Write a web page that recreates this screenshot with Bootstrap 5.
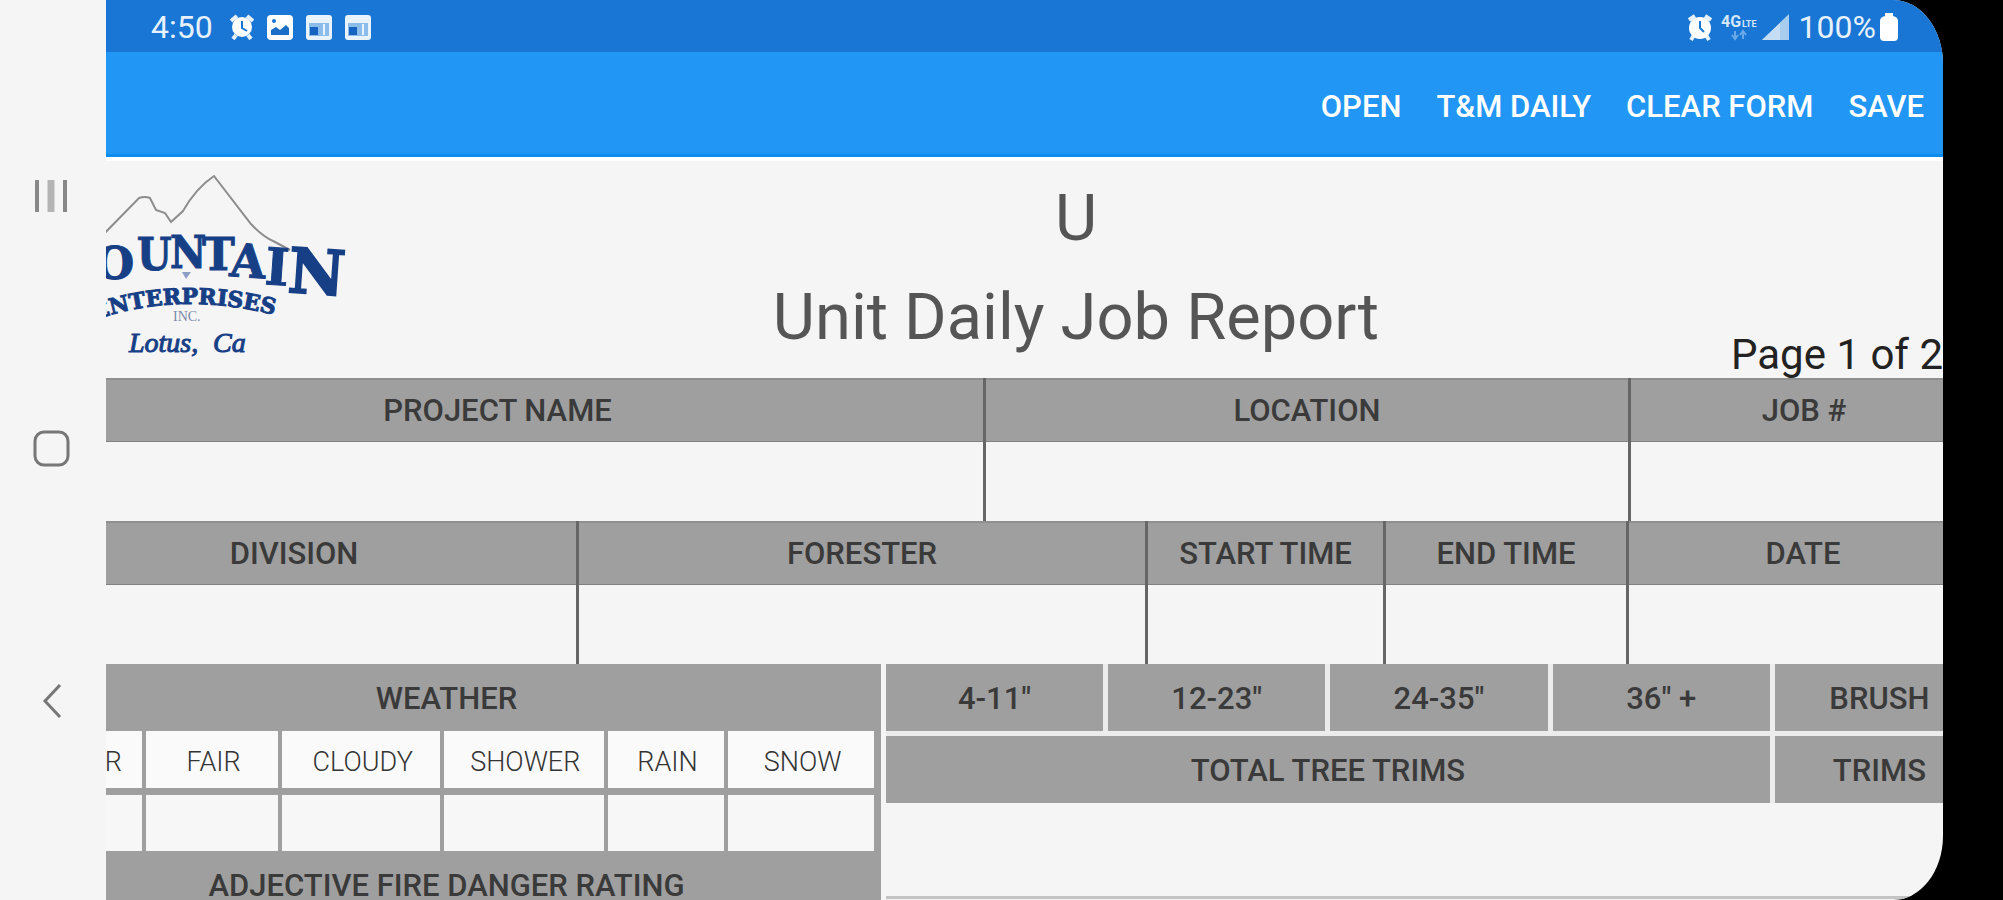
<!DOCTYPE html>
<html lang="en">
<head>
<meta charset="utf-8">
<meta name="viewport" content="width=device-width, initial-scale=1">
<title>Unit Daily Job Report</title>
<link href="https://cdn.jsdelivr.net/npm/bootstrap@5.3.0/dist/css/bootstrap.min.css" rel="stylesheet">
<style>
  body { background: #000; font-family: Roboto, "Liberation Sans", sans-serif; color: #333; }
  .device { margin-right: 60px; height: 100vh; background: #f5f5f5; border-radius: 0 50px 50px 0 / 0 64px 64px 0; }
  .sysnav { width: 106px; padding: 70px 4px 73px 0; }
  .sysnav button { width: 48px; height: 48px; }
  .statusbar { height: 52px; background: #1976d5; font-size: 32px; line-height: 40px; padding: 2px 45px 0; color: #e6f1fc; }
  .status-icons { gap: 13px; }
  .appbar { height: 105px; background: #2196f5; border-bottom: 3px solid #0b8cf0; padding: 7px 19px 0; gap: 35px; }
  .appbar button { font-size: 31px; line-height: 40px; font-weight: 500; color: #fff; }
  .sheet { margin: 0 -41px 0 -94px; }
  .sheet-head { display: grid; grid-template-columns: 409fr 1310fr 253fr; height: 221px; border-top: 4px solid #fff; }
  .sheet-head h1 { font-size: 65px; line-height: 99px; font-weight: 400; color: #555; padding-top: 8px; }
  .pageno { font-size: 42px; line-height: 46px; color: #222; }
  .fields { display: grid; margin-right: 4px; }
  .fields-a { grid-template-columns: 974fr 645fr 349fr; }
  .fields-b { grid-template-columns: 567fr 569fr 238fr 243fr 351fr; }
  .field { border-right: 3px solid #666; }
  .head { display: flex; align-items: center; justify-content: center; background: #9f9f9f; font-size: 31px; line-height: 40px; font-weight: 500; color: #3a3a3a; white-space: nowrap; }
  .field .head { height: 64px; border-top: 2px solid #8f8f8f; border-bottom: 1px solid #808080; }
  .blank { display: block; width: 100%; min-width: 0; border: 0; border-radius: 0; background: transparent; outline-offset: -3px; font-size: 27px; }
  .field .blank { height: 79px; }
  .lower { display: grid; grid-template-columns: 869fr 1098fr; column-gap: 5px; }
  .lower-left { background: #9f9f9f; }
  .lower-left .head { height: 67px; padding-top: 2px; }
  .weather { display: grid; grid-template-columns: 124fr 133fr 158fr 160fr 117fr 146fr; gap: 7px 4px; padding: 0 7px 0 6px; }
  .weather label { background: #fafafa; height: 57px; font-size: 27px; line-height: 62px; font-weight: 300; text-align: center; padding-left: 3px; }
  .weather .blank { background: #f7f7f7; height: 56px; }
  .trims { display: grid; grid-template-columns: repeat(4, 218fr) 210fr; gap: 5px; background: #ececec; }
  .trims .head { height: 67px; padding-top: 2px; }
  .trims .wide { grid-column: span 4; }
  .trims-body { height: 96px; border-bottom: 3px solid #c4c4c4; }
</style>
</head>
<body>
<div class="device d-flex overflow-hidden">
  <nav class="sysnav d-flex flex-column align-items-center justify-content-around flex-shrink-0" aria-label="System">
    <button class="btn p-0 border-0" aria-label="Recents"><svg width="48" height="48" fill="none" stroke="#888" stroke-width="4"><path d="M10 8v32M38 8v32"/><path d="M24 8v32" stroke="#b4b4b4" stroke-width="7"/></svg></button>
    <button class="btn p-0 border-0" aria-label="Home"><svg width="48" height="48" fill="none" stroke="#777" stroke-width="3"><rect x="8" y="8" width="33" height="33" rx="9"/></svg></button>
    <button class="btn p-0 border-0" aria-label="Back"><svg width="48" height="48" fill="none" stroke="#777" stroke-width="3"><path d="M33 8 18 24l15 16"/></svg></button>
  </nav>

  <div class="flex-grow-1 overflow-hidden">
    <div class="statusbar d-flex align-items-center justify-content-between">
      <div class="status-icons d-flex align-items-center">
        <span class="pe-1">4:50</span>
        <svg width="24" height="28" viewBox="0 0 24 28"><g stroke="#e6f1fc" stroke-width="4"><path d="M1 8 7 3M23 8 17 3M6 22l-3 4M18 22l3 4"/></g><circle cx="12" cy="14" r="10" fill="#fff"/><path d="M12 8v7l5 3" fill="none" stroke="#1976d5" stroke-width="2"/></svg>
        <svg width="26" height="28" viewBox="0 0 26 28"><rect y="2" width="26" height="25" rx="4" fill="#fff"/><circle cx="7" cy="8" r="2" fill="#1976d5"/><path d="M4 22v-5l5-3 4 3 6-5 3 3v7z" fill="#1c6fc6"/></svg>
        <svg width="26" height="28" viewBox="0 0 26 28"><rect y="2" width="26" height="25" rx="3" fill="#e9f3fc"/><rect x="3" y="10" width="20" height="13" fill="#8cbcea"/><rect x="4" y="14" width="8" height="8" fill="#1565c0"/><path d="M18 11v11" stroke="#e9f3fc" stroke-width="2"/></svg>
        <svg width="26" height="28" viewBox="0 0 26 28"><rect y="2" width="26" height="25" rx="3" fill="#e9f3fc"/><rect x="3" y="10" width="20" height="13" fill="#8cbcea"/><rect x="4" y="14" width="8" height="8" fill="#1565c0"/><path d="M18 11v11" stroke="#e9f3fc" stroke-width="2"/></svg>
      </div>
      <div class="d-flex align-items-center">
        <svg class="me-2" width="26" height="28" viewBox="0 0 24 28"><g stroke="#e6f1fc" stroke-width="4"><path d="M1 7 7 3M23 7 17 3M6 22l-3 5M18 22l3 5"/></g><circle cx="12" cy="15" r="11" fill="#fff"/><path d="M12 8v7l4 4" fill="none" stroke="#1976d5" stroke-width="2"/></svg>
        <svg class="me-1" width="36" height="28" viewBox="0 0 36 28"><text x="0" y="14" font-size="16" font-weight="700" fill="#d5e8fa">4G</text><text x="21" y="14" font-size="9" font-weight="700" fill="#d5e8fa">LTE</text><path d="M14 25V18m-3 4 3 4 3-4M22 26v-7m-3 3 3-4 3 4" fill="none" stroke="#69a9e8" stroke-width="2"/></svg>
        <svg class="me-2" width="30" height="28" viewBox="2 0 30 28"><path d="M3 27 30 1v26z" fill="#a9cdef"/><path d="M3 27 21 10v17z" fill="#c5def5"/></svg>
        <span class="me-1">100%</span>
        <svg width="18" height="28" viewBox="0 0 18 28"><path d="M5 0h8v3q5 1 5 5v16q0 4-4 4H4q-4 0-4-4V8q0-4 5-5z" fill="#fff"/></svg>
      </div>
    </div>

    <div class="appbar d-flex align-items-center justify-content-end">
      <button class="btn p-0 border-0">OPEN</button>
      <button class="btn p-0 border-0">T&amp;M DAILY</button>
      <button class="btn p-0 border-0">CLEAR FORM</button>
      <button class="btn p-0 border-0">SAVE</button>
    </div>

    <main class="sheet">
      <header class="sheet-head">
        <svg width="350" height="217" viewBox="12 161 350 217" role="img" aria-label="Mountain Enterprises Inc., Lotus, Ca">
          <path d="M96 242 139 198q6-2 11 0l6 12 9 3 6 9 12-11q13-23 31-35l37 48q12 13 24 18l15 8" fill="none" stroke="#8c8c8c" stroke-width="2"/>
          <g fill="#173f86" stroke="#173f86" stroke-width="1" font-family="'DejaVu Serif',serif" font-weight="700" font-size="43">
            <text x="44" y="286" rotate="-8">M</text>
            <text x="95" y="279" font-size="45">O</text>
            <text x="137" y="270" font-size="44" font-family="'DejaVu Serif Condensed','DejaVu Serif',serif">U</text>
            <text x="170" y="268" font-size="44" font-family="'DejaVu Serif Condensed','DejaVu Serif',serif">N</text>
            <text x="202" y="270" font-size="44">T</text>
            <text x="229" y="276" font-size="46" rotate="4">A</text>
            <text x="264" y="284" font-size="51" rotate="4">I</text>
            <text x="287" y="292" font-size="62" rotate="4" stroke-width="2">N</text>
          </g>
          <path d="M182 272h9l-5 7z" fill="#8ba0c4"/>
          <path id="arc" d="M95 320Q192 286 304 324" fill="none"/>
          <text fill="#173f86" stroke="#173f86" font-family="'DejaVu Serif',serif" font-weight="700" font-size="22"><textPath href="#arc">ENTERPRISES</textPath></text>
          <text x="173" y="321" fill="#7d8aa8" font-family="Liberation Serif,serif" font-size="14">INC.</text>
          <g fill="#173f86" stroke="#173f86" stroke-width="1" font-family="Liberation Serif,serif" font-style="italic" font-size="28">
            <text x="129" y="352">Lotus,</text>
            <text x="213" y="352">Ca</text>
          </g>
        </svg>
        <h1 class="m-0 text-center">U<br>Unit Daily Job Report</h1>
        <div class="pageno align-self-end text-nowrap">Page 1 of 2</div>
      </header>

      <section class="fields fields-a">
        <div class="field"><label class="head" for="project">PROJECT NAME</label><input class="blank" id="project" type="text"></div>
        <div class="field"><label class="head" for="location">LOCATION</label><input class="blank" id="location" type="text"></div>
        <div class="field"><label class="head" for="job">JOB #</label><input class="blank" id="job" type="text"></div>
      </section>
      <section class="fields fields-b">
        <div class="field"><label class="head" for="division">DIVISION</label><input class="blank" id="division" type="text"></div>
        <div class="field"><label class="head" for="forester">FORESTER</label><input class="blank" id="forester" type="text"></div>
        <div class="field"><label class="head" for="start">START TIME</label><input class="blank" id="start" type="text"></div>
        <div class="field"><label class="head" for="end">END TIME</label><input class="blank" id="end" type="text"></div>
        <div class="field"><label class="head" for="date">DATE</label><input class="blank" id="date" type="text"></div>
      </section>

      <section class="lower">
        <div class="lower-left">
          <div class="head">WEATHER</div>
          <div class="weather">
            <label for="clear">CLEAR</label><label for="fair">FAIR</label><label for="cloudy">CLOUDY</label><label for="shower">SHOWER</label><label for="rain">RAIN</label><label for="snow">SNOW</label>
            <input class="blank" id="clear" type="text"><input class="blank" id="fair" type="text"><input class="blank" id="cloudy" type="text"><input class="blank" id="shower" type="text"><input class="blank" id="rain" type="text"><input class="blank" id="snow" type="text">
          </div>
          <div class="head">ADJECTIVE FIRE DANGER RATING</div>
        </div>
        <div>
          <div class="trims">
            <div class="head">4-11"</div><div class="head">12-23"</div><div class="head">24-35"</div><div class="head">36" +</div><div class="head">BRUSH</div>
            <div class="head wide">TOTAL TREE TRIMS</div><div class="head">TRIMS</div>
          </div>
          <div class="trims-body"></div>
        </div>
      </section>
    </main>
  </div>
</div>
<script src="https://cdn.jsdelivr.net/npm/bootstrap@5.3.0/dist/js/bootstrap.bundle.min.js"></script>
</body>
</html>
